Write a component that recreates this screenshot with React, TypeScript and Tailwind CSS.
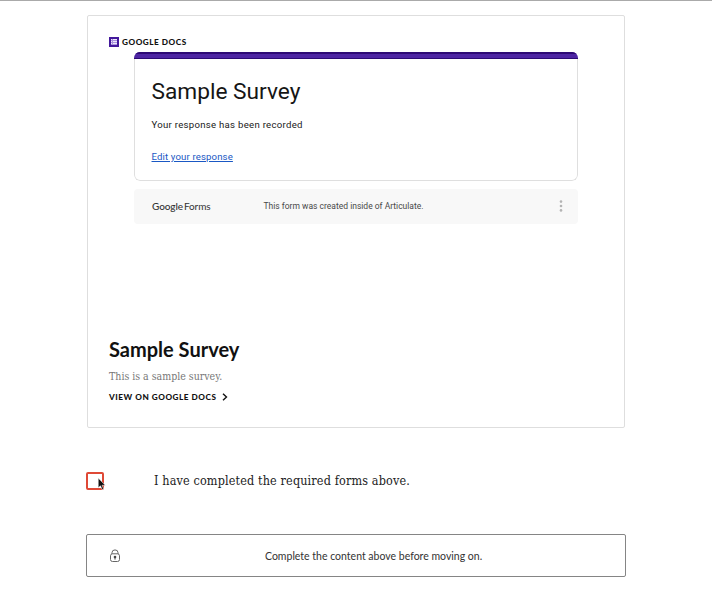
import type { ReactNode } from "react";

function FormsIcon() {
  return (
    <svg viewBox="0 0 10 10" className="h-2.5 w-2.5">
      <rect width="10" height="10" fill="#43199c" />
      <rect x="2" y="2" width="6" height="6" fill="#a993dc" />
      <path d="M2 2.5h1M2 4.5h1M2 6.5h1M4 2.5h4M4 4.5h4M4 6.5h4" stroke="#eee8fa" strokeWidth="1" />
    </svg>
  );
}

function LockIcon() {
  return (
    <svg viewBox="0 0 12 14" className="h-3.5 w-3" fill="none" stroke="#666" strokeWidth="1">
      <path d="M3 5V3.7a3 2.8 0 0 1 6 0V5" />
      <rect x="1.5" y="4.8" width="9" height="7.7" rx="2" />
      <circle cx="6" cy="8" r="1.3" fill="#444" stroke="none" />
      <path d="M6 8v2.6" stroke="#444" />
    </svg>
  );
}

function Cursor() {
  return (
    <svg viewBox="0 0 9 13" className="absolute top-[3px] left-[9px] h-[14px] w-[10px]">
      <path
        d="M1 1v9l2.1-1.8 1.5 3.5 1.5-.6-1.5-3.4h3z"
        fill="#111"
        stroke="#fff"
        strokeWidth="0.5"
      />
    </svg>
  );
}

function Label({ children }: { children: ReactNode }) {
  return (
    <span className="font-[Lato,sans-serif] text-[8.2px] leading-3 font-black tracking-[0.54px] whitespace-nowrap text-[#111]">
      {children}
    </span>
  );
}

function FormEmbed() {
  return (
    <div className="mx-[25px] font-[Roboto,sans-serif]">
      <div className="flex h-[129px] flex-col overflow-hidden rounded-[6px]">
        <div className="h-[7px] border-t-2 border-b border-[#2d0a75] bg-[#4d25a3]" />
        <div className="flex grow flex-col items-start rounded-b-[6px] border-x border-b border-[#dfdfdf] px-[16.5px] pt-[18px]">
          <h1 className="text-[22.7px] leading-[30px] whitespace-nowrap text-[#151515]">
            Sample Survey
          </h1>
          <p className="mt-3 text-[9.6px] leading-3 tracking-[0.28px] whitespace-nowrap text-[#202020]">
            Your response has been recorded
          </p>
          <a
            href="#"
            className="mt-5 text-[9.6px] leading-3 tracking-[0.14px] whitespace-nowrap text-[#1a58c4] underline"
          >
            Edit your response
          </a>
        </div>
      </div>

      <div className="mt-2 flex h-[35px] items-center rounded-[4px] bg-[#f8f8f8] px-[18px] pb-px">
        <div className="w-[111.5px] font-[Lato,sans-serif] text-[10px] leading-3 tracking-[-0.1px] whitespace-nowrap text-[#333]">
          <span className="mr-px font-medium">Google</span>Forms
        </div>
        <span className="text-[8.5px] leading-3 whitespace-nowrap text-[#484848]">
          This form was created inside of Articulate.
        </span>
        <svg viewBox="0 0 4 12" className="mr-[-3px] ml-auto h-3 w-1" fill="#b4b4b4">
          <circle cx="2" cy="1.6" r="1.3" />
          <circle cx="2" cy="6" r="1.3" />
          <circle cx="2" cy="10.4" r="1.3" />
        </svg>
      </div>
    </div>
  );
}

export default function App() {
  return (
    <main className="flex h-[600px] w-[712px] flex-col overflow-hidden border-t border-[#aaa] bg-white pl-[86px]">
      <section className="mt-[14px] ml-px flex h-[413px] w-[538px] flex-col rounded-[2px] border border-[#dedede] px-[21px] pt-[20px]">
        <div className="flex h-3 items-center gap-[3px]">
          <FormsIcon />
          <Label>GOOGLE DOCS</Label>
        </div>
        <div className="mt-1">
          <FormEmbed />
        </div>
        <h2 className="mt-[112px] font-[Lato,sans-serif] text-[20px] leading-[26px] font-bold whitespace-nowrap text-[#111]">
          Sample Survey
        </h2>
        <p className="mt-[6px] font-['DejaVu_Serif_Condensed','DejaVu_Serif',serif] text-[10.5px] leading-4 whitespace-nowrap text-[#777]">
          This is a sample survey.
        </p>
        <a href="#" className="mt-[7px] flex h-3 items-center gap-[5px]">
          <Label>VIEW ON GOOGLE DOCS</Label>
          <svg viewBox="0 0 6 8" className="h-2 w-1.5" fill="none" stroke="#111" strokeWidth="1.4">
            <path d="M1 .7 4.5 4 1 7.3" />
          </svg>
        </a>
      </section>

      <div className="mt-[44px] flex h-[18px] items-center">
        <div className="relative h-[18px] w-[18px] rounded-[2px] border-2 border-[#df4936] bg-white">
          <Cursor />
        </div>
        <span className="ml-[50px] font-['DejaVu_Serif_Condensed','DejaVu_Serif',serif] text-[12.5px] leading-4 tracking-[0.14px] whitespace-nowrap text-[#222]">
          I have completed the required forms above.
        </span>
      </div>

      <div className="mt-[44px] flex h-[43px] w-[540px] items-center rounded-[2px] border border-[#858585] pl-[22px]">
        <LockIcon />
        <span className="ml-[144px] font-[Lato,sans-serif] text-[10.5px] leading-4 whitespace-nowrap text-[#333]">
          Complete the content above before moving on.
        </span>
      </div>
    </main>
  );
}
